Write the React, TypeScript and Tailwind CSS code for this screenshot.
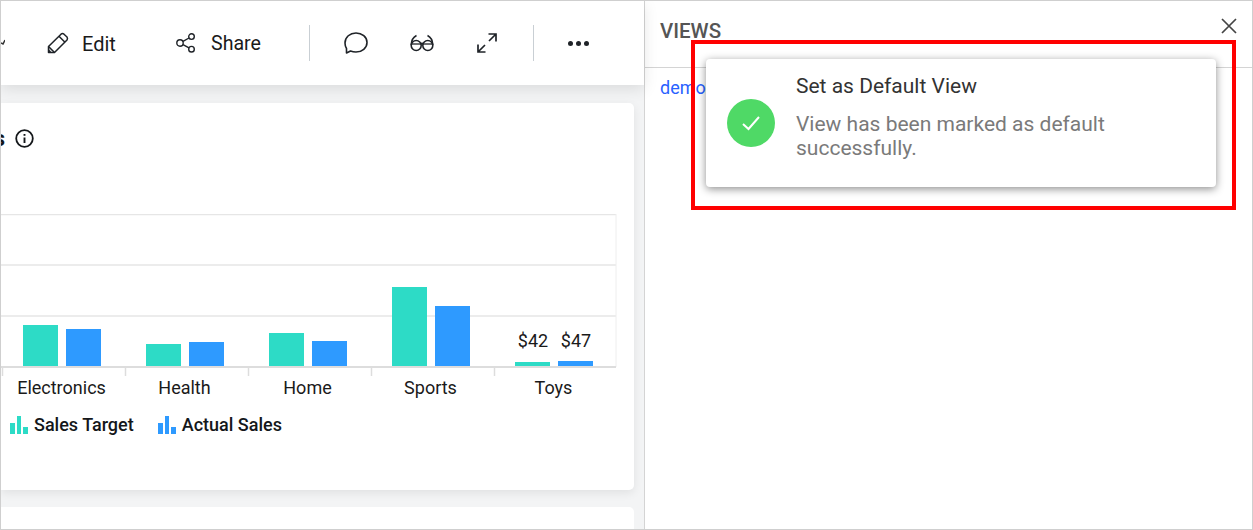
import React from 'react';

const bars = [
  { label: 'Electronics', x: 0, target: 42, actual: 38 },
  { label: 'Health', x: 123, target: 23, actual: 25 },
  { label: 'Home', x: 246, target: 34, actual: 26 },
  { label: 'Sports', x: 369, target: 80, actual: 61 },
  { label: 'Toys', x: 492, target: 5, actual: 6 },
];

const PencilIcon = () => (
  <svg width="22" height="22" viewBox="0 0 22 22" fill="none" stroke="#1f2328" strokeWidth="1.5" strokeLinejoin="round">
    <path d="M1.5 20.5 V14.5 L14 2.2 Q15.5 1 17 2.2 L20 5 Q21 6.5 20 8 L7.5 20.5 Z" />
    <path d="M1.5 14.5 L7.5 20.5 M12 4.2 L18 10.2" />
    <path d="M1.5 17 L4.5 20.5 H1.5 Z" fill="#1f2328" strokeWidth="0.5" />
  </svg>
);

const ShareIcon = () => (
  <svg width="20" height="20" viewBox="0 0 20 20" fill="none" stroke="#1f2328" strokeWidth="1.4">
    <circle cx="4" cy="10" r="3.2" />
    <circle cx="15.5" cy="3.6" r="2.8" />
    <circle cx="15.5" cy="16.2" r="2.8" />
    <path d="M7 8.4 L13 5 M7 11.6 L13 14.8" />
  </svg>
);

const CommentIcon = () => (
  <svg width="24" height="22" viewBox="0 0 24 22" fill="none" stroke="#1f2328" strokeWidth="1.6" strokeLinejoin="round">
    <path d="M2.5 21 V16.5 Q1 14 1 11 C1 5 6 1 12 1 C18 1 23 5 23 10.5 C23 16 18 20 12 20 Q9 20 6.5 19 Z" />
  </svg>
);

const GlassesIcon = () => (
  <svg width="24" height="18" viewBox="0 0 24 18" fill="none" stroke="#1f2328" strokeWidth="1.6">
    <path d="M1 10 H23" strokeWidth="1.3" />
    <circle cx="6.2" cy="11.5" r="5" />
    <circle cx="17.8" cy="11.5" r="5" />
    <path d="M1.2 11 Q1.5 4 6.5 1.5 M22.8 11 Q22.5 4 17.5 1.5 M10.5 10 Q12 8.5 13.5 10" />
  </svg>
);

const ExpandIcon = () => (
  <svg width="20" height="20" viewBox="0 0 20 20" fill="none" stroke="#1f2328" strokeWidth="1.7">
    <path d="M1 19 L8 12 M1 11.5 V19 H8.5" />
    <path d="M19 1 L12 8 M11.5 1 H19 V8.5" />
  </svg>
);

const InfoIcon = () => (
  <svg width="19" height="19" viewBox="0 0 19 19" fill="none" stroke="#14171a">
    <circle cx="9.5" cy="9.5" r="8.3" strokeWidth="1.8" />
    <path d="M9.5 8.5 V14" strokeWidth="1.9" />
    <path d="M9.5 5 V6.8" strokeWidth="1.9" />
  </svg>
);

const LegendIcon = ({ color }: { color: string }) => (
  <svg width="18" height="18" viewBox="0 0 18 18" fill={color}>
    <rect x="0" y="7" width="5" height="11" />
    <rect x="7" y="0" width="4" height="18" />
    <rect x="13" y="11" width="5" height="7" />
  </svg>
);

const Chart = () => (
  <svg width="634" height="190" viewBox="1 1 634 190" className="block" fontFamily="Roboto, sans-serif">
    <path d="M0 1.5 H616 M0 52 H616 M0 103 H616" stroke="#e6e6e6" strokeWidth="1.5" />
    <path d="M616 1 V154" stroke="#eeeeee" strokeWidth="1" />
    {bars.map((b) => (
      <g key={b.label}>
        <path d={`M${b.x + 2.5} 154 V163`} stroke="#dddddd" strokeWidth="1.5" />
        <rect x={b.x + 23} y={154 - b.target} width="35" height={b.target} fill="#2ddbc6" />
        <rect x={b.x + 66} y={154 - b.actual} width="35" height={b.actual} fill="#2e9aff" />
        <text x={b.x + 61.5} y="181" textAnchor="middle" fontSize="18" fill="#1a1a1a">{b.label}</text>
      </g>
    ))}
    <path d="M0 154 H616" stroke="#dddddd" strokeWidth="2" />
    <text x="533" y="134" textAnchor="middle" fontSize="18" fill="#1a1a1a">$42</text>
    <text x="576" y="134" textAnchor="middle" fontSize="18" fill="#1a1a1a">$47</text>
  </svg>
);

export default function App() {
  return (
    <div className="relative flex w-[1253px] h-[530px] overflow-hidden border border-[#cfcfcf] bg-white font-['Roboto',sans-serif]">
      {/* left side, dashboard */}
      <div className="flex flex-col w-[643px] bg-[#f3f4f5]">
        <div className="relative z-10 flex items-center h-[84px] shrink-0 bg-white shadow-[0_4px_14px_rgba(0,0,0,0.1)] text-[20px] text-[#1a1a1a]">
          <svg width="4" height="8" viewBox="0 0 4 8" className="shrink-0 mb-[2px]" fill="none" stroke="#333" strokeWidth="1.5">
            <path d="M0 5 L2 6 L4 2" />
          </svg>
          <span className="ml-[42px]"><PencilIcon /></span>
          <span className="ml-[13px] pt-[2px] w-[33px]">Edit</span>
          <span className="ml-[61px]"><ShareIcon /></span>
          <span className="ml-[15px] pt-[2px] w-[50px] text-[19.6px]">Share</span>
          <span className="ml-[48px] h-[36px] w-px bg-[#c9cfd4]" />
          <span className="ml-[34px]"><CommentIcon /></span>
          <span className="ml-[42px]"><GlassesIcon /></span>
          <span className="ml-[43px]"><ExpandIcon /></span>
          <span className="ml-[36px] h-[36px] w-px bg-[#c9cfd4]" />
          <span className="ml-[34px] flex gap-[3px]">
            <span className="w-[5px] h-[5px] rounded-full bg-[#1f2328]" />
            <span className="w-[5px] h-[5px] rounded-full bg-[#1f2328]" />
            <span className="w-[5px] h-[5px] rounded-full bg-[#1f2328]" />
          </span>
        </div>

        <div className="flex flex-col gap-[17px] pt-[18px]">
          <div className="w-[633px] h-[387px] shrink-0 bg-white rounded-r-[5px] shadow-[0_3px_10px_rgba(0,0,0,0.08)]">
            <div className="flex items-start gap-[10px] pt-[26px] h-[111px]">
              <div className="flex justify-end w-[4px] overflow-hidden text-[22px] font-bold leading-[20px] text-[#14171a]">
                <span>Sales</span>
              </div>
              <InfoIcon />
            </div>
            <Chart />
            <div className="flex items-center pl-[9px] pt-[9px] text-[18px] font-medium text-[#14171a] leading-[24px]">
              <LegendIcon color="#2ddbc6" />
              <span className="ml-[6px]">Sales Target</span>
              <span className="ml-[24px]"><LegendIcon color="#2e9aff" /></span>
              <span className="ml-[6px]">Actual Sales</span>
            </div>
          </div>
          <div className="w-[633px] h-[40px] shrink-0 bg-white rounded-r-[5px]" />
        </div>
      </div>

      {/* right side, views panel */}
      <div className="flex-1 flex flex-col border-l border-[#d4d4d4] bg-white">
        <div className="flex items-center justify-between h-[67px] shrink-0 border-b border-[#d4d4d4] pl-[15px] pr-[15px] pb-[6px]">
          <span className="text-[20.5px] font-medium text-[#555555]">VIEWS</span>
          <svg width="16" height="16" viewBox="0 0 16 16" className="mb-[11px]" fill="none" stroke="#444" strokeWidth="1.7">
            <path d="M1 1 L15 15 M15 1 L1 15" />
          </svg>
        </div>
        <div className="pl-[15px] pt-[8px] text-[18px] leading-[24px] text-[#2962ff]">demo view</div>
      </div>

      {/* toast and the red mark over it */}
      <div className="absolute left-[705px] top-[58px] flex w-[510px] h-[128px] rounded-[4px] bg-white shadow-[0_2px_8px_rgba(0,0,0,0.45)]">
        <div className="ml-[21px] mt-[40px] flex items-center justify-center w-[48px] h-[48px] rounded-full bg-[#4fd966]">
          <svg width="20" height="16" viewBox="0 0 20 16" fill="none" stroke="#ffffff" strokeWidth="2">
            <path d="M2 9 L7.5 14 L18 2" />
          </svg>
        </div>
        <div className="ml-[21px] pt-[14px] w-[360px]">
          <div className="text-[21px] leading-[26px] text-[#333333]">Set as Default View</div>
          <div className="mt-[13px] text-[21px] leading-[24px] text-[#7a7a7a]">View has been marked as default successfully.</div>
        </div>
      </div>
      <div className="absolute left-[690px] top-[39px] w-[545px] h-[170px] border-[4px] border-[#ff0000]" />
    </div>
  );
}
